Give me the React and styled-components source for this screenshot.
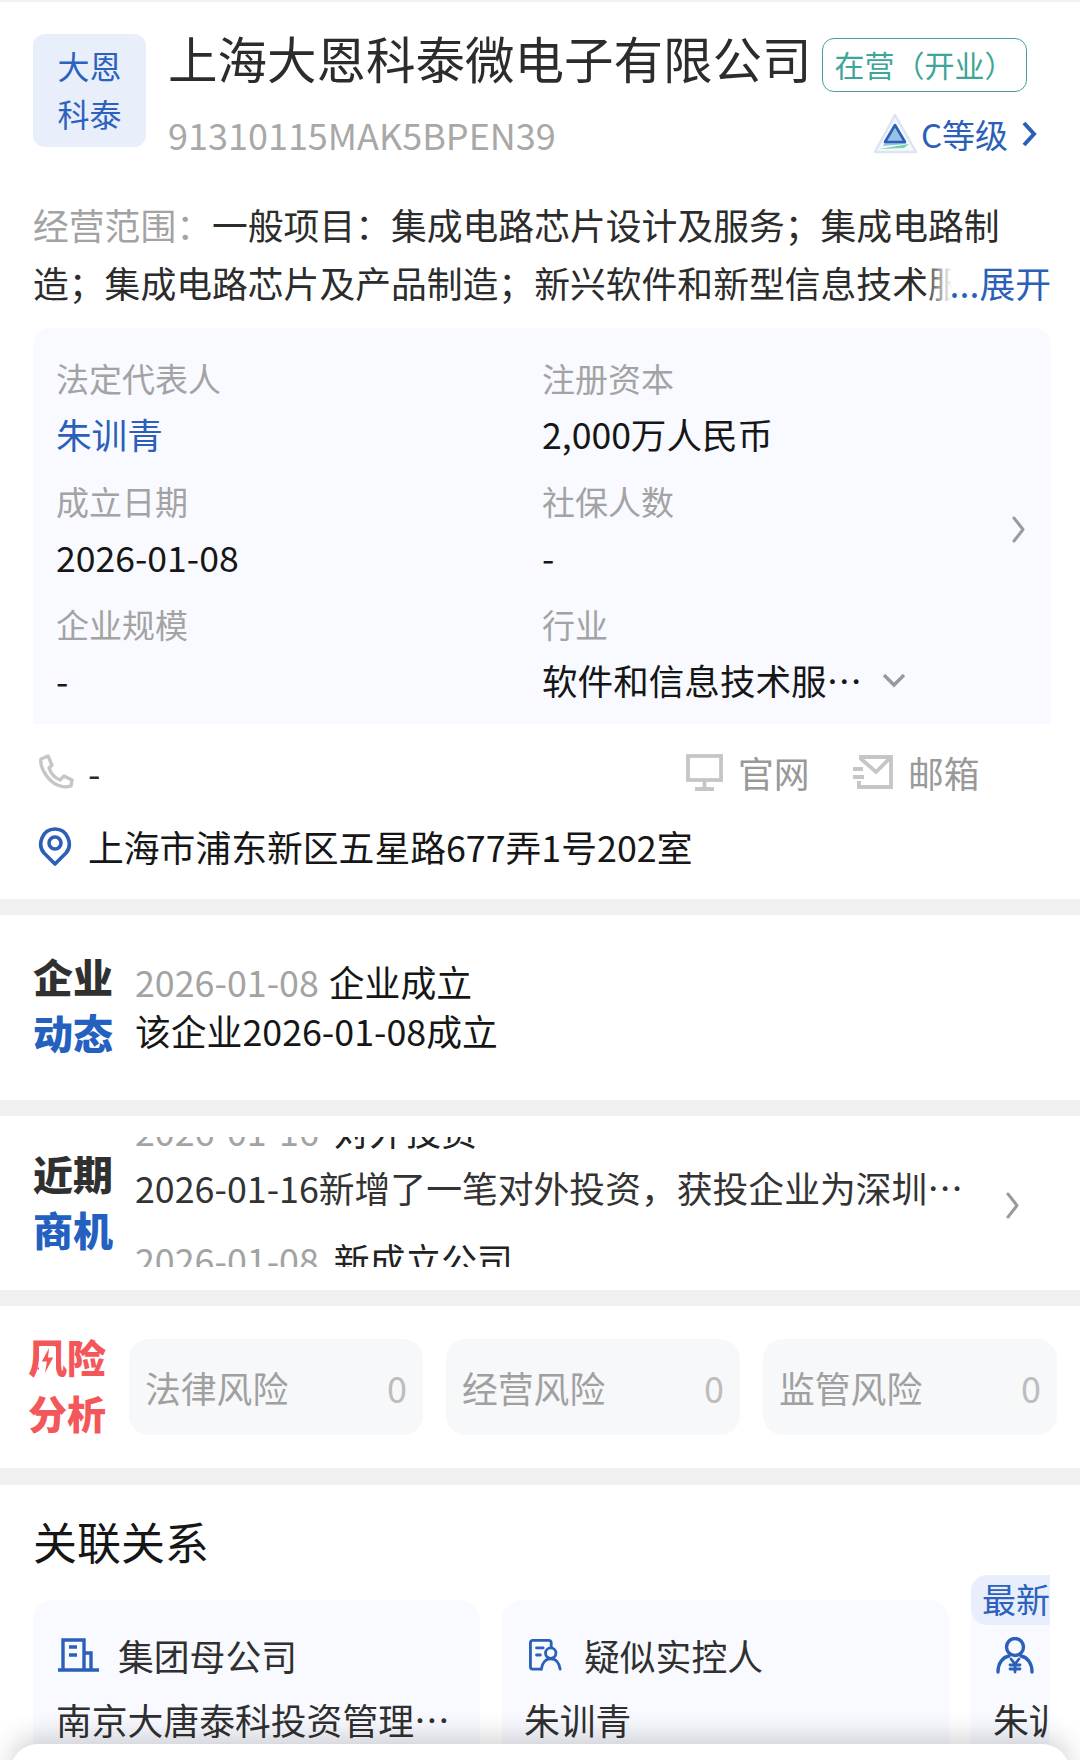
import React from "react";
import styled, { createGlobalStyle } from "styled-components";

const Global = createGlobalStyle`
  html, body { margin: 0; padding: 0; background: #fff; }
  * { box-sizing: border-box; }
  body { font-family: "Noto Sans CJK SC", "Noto Sans", sans-serif; color: #222; }
`;

const Page = styled.div`
  position: relative;
  width: 1080px;
  height: 1760px;
  overflow: hidden;
  background: #fff;
  border-top: 2px solid #f2f2f2;
`;

const Band = styled.div`
  height: ${(p) => p.$h || 16}px;
  background: #f0f0f0;
`;

const Overview = styled.section`
  padding: 32px 29px 23px 33px;
`;

const Header = styled.header`
  display: flex;
  gap: 22px;
`;

const Logo = styled.div`
  flex: none;
  width: 113px;
  height: 113px;
  border-radius: 12px;
  background: #e8eefa;
  color: #2c62bd;
  font-size: 32px;
  line-height: 48px;
  padding: 7px 0 0;
  text-align: center;
`;

const HeadCol = styled.div`
  flex: 1;
  min-width: 0;
`;

const TitleRow = styled.div`
  display: flex;
  align-items: flex-start;
  gap: 10px;
  height: 58px;
`;

const Title = styled.h1`
  margin: 0;
  flex: none;
  font-size: 49.5px;
  line-height: 48px;
  font-weight: 400;
  color: #2c2c2c;
  white-space: nowrap;
`;

const StatusTag = styled.span`
  flex: none;
  width: 205px;
  height: 54px;
  margin-top: 4px;
  border: 1.5px solid #4c9ba2;
  border-radius: 12px;
  color: #3fa597;
  font-size: 30px;
  line-height: 50px;
  padding-left: 12px;
  white-space: nowrap;
`;

const CodeRow = styled.div`
  display: flex;
  align-items: center;
  justify-content: space-between;
  height: 48px;
  margin-top: 18px;
`;

const Code = styled.span`
  font-size: 36px;
  line-height: 48px;
  color: #a8a8a8;
`;

const Level = styled.span`
  display: flex;
  align-items: center;
  color: #2b5fb8;
  font-size: 33px;
  line-height: 48px;
  margin-right: 14px;
`;

const LevelGap = styled.span`
  width: 14px;
`;

const Scope = styled.div`
  position: relative;
  width: 1018px;
  height: 116px;
  margin-top: 37px;
  overflow: hidden;
  font-size: 35.8px;
  line-height: 58px;
  color: #2c2c2c;
`;

const ScopeKey = styled.span`
  color: #a3a3a3;
`;

const Expand = styled.span`
  position: absolute;
  right: 0;
  bottom: 0;
  padding-left: 26px;
  height: 58px;
  color: #2b5fb8;
  background: linear-gradient(90deg, rgba(255, 255, 255, 0), #fff 28px);
`;

const Panel = styled.div`
  position: relative;
  margin-top: 17px;
  width: 1018px;
  height: 396px;
  padding: 22px 0 0 23px;
  border-radius: 16px 16px 0 0;
  background: #f8faff;
  display: grid;
  grid-template-columns: 486px 1fr;
  row-gap: 11px;
  align-content: start;
`;

const Cell = styled.div`
  min-width: 0;
`;

const CellLabel = styled.div`
  font-size: 33px;
  line-height: 56px;
  color: #a3a3a3;
`;

const CellValue = styled.div`
  display: flex;
  align-items: center;
  font-size: 35.6px;
  line-height: 56px;
  color: ${(p) => p.$color || "#161616"};
  white-space: nowrap;
`;

const DownIcon = styled.svg`
  margin-left: 20px;
`;

const PanelArrow = styled.span`
  position: absolute;
  right: 25px;
  top: 188px;
  display: flex;
`;

const ContactRow = styled.div`
  display: flex;
  align-items: center;
  height: 60px;
  margin-top: 18px;
  padding-right: 41px;
  font-size: 35.8px;
  color: #2c2c2c;
`;

const Phone = styled.span`
  display: flex;
  align-items: center;
  gap: 14px;
  flex: 1;
  padding-left: 5px;
`;

const Action = styled.span`
  display: flex;
  align-items: center;
  gap: 15px;
  width: ${(p) => p.$w}px;
  color: #999;
`;

const AddressRow = styled.div`
  display: flex;
  align-items: center;
  gap: 16px;
  height: 60px;
  margin-top: 14px;
  padding-left: 5px;
  font-size: 35.8px;
  color: #161616;
`;

const Module = styled.section`
  display: flex;
  height: ${(p) => p.$h}px;
  padding: ${(p) => p.$top}px 0 0 33px;
`;

const ModuleLabel = styled.div`
  flex: none;
  width: 80px;
  margin-top: ${(p) => p.$mt || 0}px;
  margin-right: 22px;
  font-size: 40px;
  line-height: 56px;
  font-weight: 900;
  color: #303030;
`;

const Accent = styled.div`
  color: #2460c0;
`;

const NewsCol = styled.div`
  margin-top: 9px;
  font-size: 35.8px;
  line-height: 49px;
  color: #161616;
`;

const Dim = styled.span`
  color: #a3a3a3;
  margin-right: ${(p) => p.$gap || 10}px;
`;

const Ticker = styled.div`
  flex: none;
  width: 825px;
  height: 130px;
  overflow: hidden;
`;

const TickerTrack = styled.div`
  margin-top: -35px;
`;

const TickerTitle = styled.div`
  font-size: 35.8px;
  line-height: 56px;
  white-space: nowrap;
  color: #222;
`;

const TickerDetail = styled.div`
  font-size: 35.8px;
  line-height: 58px;
  margin-bottom: 15px;
  color: #333;
  white-space: nowrap;
`;

const TickerArrow = styled.span`
  flex: none;
  margin: 55px 0 0 45px;
  display: flex;
`;

const RiskSection = styled.section`
  display: flex;
  height: 162px;
  padding: 22px 0 0 28px;
`;

const RiskLabel = styled.div`
  position: relative;
  flex: none;
  width: 78px;
  margin-right: 23px;
  font-size: 39px;
  line-height: 56px;
  font-weight: 900;
  color: #f4575a;
`;

const Bolt = styled.span`
  position: absolute;
  left: 11px;
  top: 19px;
  width: 17px;
  height: 26px;
  background: #fff;
  display: flex;
  align-items: center;
  justify-content: center;
`;

const RiskCards = styled.div`
  display: flex;
  gap: 23px;
  margin-top: 11px;
`;

const RiskCard = styled.div`
  display: flex;
  align-items: center;
  justify-content: space-between;
  width: 294px;
  height: 96px;
  padding: 0 16px 0 16px;
  border-radius: 20px;
  background: #f7f8fa;
  font-size: 35.8px;
  color: #a0a0a0;
`;

const RiskCount = styled.span`
  color: #bdbdbd;
  font-size: 36px;
`;

const Relation = styled.section`
  padding: 26px 30px 0 33px;
`;

const Heading = styled.h2`
  margin: 0;
  font-size: 44px;
  line-height: 60px;
  font-weight: 400;
  color: #161616;
`;

const Scroller = styled.div`
  display: flex;
  gap: 22px;
  width: 1017px;
  height: 200px;
  margin-top: 4px;
  padding-top: 25px;
  overflow: hidden;
`;

const RelCard = styled.div`
  position: relative;
  flex: none;
  width: 447px;
  height: 175px;
  padding: 31px 0 0 ${(p) => p.$pad || 23}px;
  border-radius: 20px 20px 0 0;
  background: #f8faff;
`;

const RelHead = styled.div`
  display: flex;
  align-items: center;
  gap: ${(p) => p.$gap || 18}px;
  height: 48px;
  font-size: 35.8px;
  color: #303030;
  white-space: nowrap;
`;

const RelIcon = styled.span`
  display: flex;
  margin-left: ${(p) => p.$ml || 0}px;
`;

const RelValue = styled.div`
  margin-top: 16px;
  font-size: 35.8px;
  line-height: 48px;
  color: #303030;
  white-space: nowrap;
`;

const NewTag = styled.span`
  position: absolute;
  left: 0;
  top: -25px;
  height: 50px;
  padding: 0 14px 0 11px;
  border-radius: 16px 0 0 16px;
  background: #e8eefb;
  color: #2c62bd;
  font-size: 34px;
  line-height: 48px;
  white-space: nowrap;
`;

const Sheet = styled.div`
  position: absolute;
  left: 10px;
  right: 10px;
  bottom: -30px;
  height: 46px;
  border-radius: 28px 28px 0 0;
  background: #fff;
  box-shadow: 0 -8px 26px rgba(0, 0, 0, 0.17);
`;

const Chevron = ({ color = "#9a9a9a", w = 15, h = 27, sw = 3 }) => (
  <svg width={w} height={h} viewBox="0 0 15 27" fill="none" stroke={color} strokeWidth={sw} strokeLinecap="round" strokeLinejoin="round">
    <path d="M3 2l9 11.500L3 25" />
  </svg>
);

const LevelChevron = () => (
  <svg width="15" height="26" viewBox="0 0 15 26" fill="none" stroke="#2b5fb8" strokeWidth="4" strokeLinejoin="miter">
    <path d="M2 2l10 11-10 11" />
  </svg>
);

const LevelSvg = styled.svg`
  margin-right: 2px;
`;

const LevelIcon = () => (
  <LevelSvg width="46" height="42" viewBox="0 0 46 42">
    <path d="M22 2 L43 39 L2 39 Z" fill="#f6f9fd" stroke="#dbe5f4" strokeWidth="2.500" strokeLinejoin="round" />
    <path d="M22 12 L33 31 L10 33 Z" fill="#9cc3e6" />
    <path d="M22 12 L32 29 L12 29 Z" fill="#99c1e6" stroke="#2b5fb8" strokeWidth="2.600" strokeLinejoin="round" />
    <path d="M6 36 L36 31 L31 35 Z" fill="#6fd6a6" />
  </LevelSvg>
);

const PhoneIcon = () => (
  <svg width="36" height="36" viewBox="0 0 36 36" fill="none" stroke="#c6c6c6" strokeWidth="3.400" strokeLinejoin="round">
    <path d="M3 5 L10 2 L14 11 L11 14 C13 20 17 24 22 26 L26 22 L34 26 L33 32 C24 35 14 30 8 21 C4 15 2 10 3 5 Z" />
  </svg>
);

const MonitorIcon = () => (
  <svg width="37" height="37" viewBox="0 0 37 37" fill="none" stroke="#c6c6c6" strokeWidth="3.800">
    <rect x="2" y="2" width="33" height="24" />
    <path d="M18.500 26v8M9 35h19" />
  </svg>
);

const MailIcon = () => (
  <svg width="40" height="34" viewBox="0 0 40 34" fill="none" stroke="#c6c6c6" strokeWidth="3.800">
    <path d="M6 2h32v30H6v-6M7 3l16 14L37 3" />
    <path d="M0 14h10M0 22h11" />
  </svg>
);

const PinIcon = () => (
  <svg width="34" height="39" viewBox="0 0 34 39" fill="none" stroke="#2b5fb8" strokeWidth="3.600">
    <path d="M17 37 L6 26 C-1 18 4 2 17 2 C30 2 35 18 28 26 Z" strokeLinejoin="round" />
    <circle cx="17" cy="16" r="6" />
  </svg>
);

const BoltIcon = () => (
  <svg width="15" height="25" viewBox="0 0 13 24" fill="#f4575a">
    <path d="M8 0 L1 13 L6 13 L4 24 L12 9 L7 9 Z" />
  </svg>
);

const BuildingIcon = () => (
  <svg width="42" height="34" viewBox="0 0 42 34" fill="none" stroke="#2b5fb8" strokeWidth="3.400">
    <path d="M5 32V2h21v30M26 15h7v17M0 32h41" />
    <path d="M11 9h8M11 17h8" strokeWidth="3.400" />
  </svg>
);

const DocPersonIcon = () => (
  <svg width="34" height="34" viewBox="0 0 36 34" fill="none" stroke="#2b5fb8" strokeWidth="3" strokeLinecap="round">
    <path d="M13 32H4a2.500 2.500 0 0 1-2.500-2.500V4A2.500 2.500 0 0 1 4 1.500h17a2.500 2.500 0 0 1 2.500 2.500v5" />
    <path d="M8 9.500h7M8 17h4" />
    <circle cx="23" cy="15" r="5.500" />
    <path d="M13 32c1-7 5-11 10-11s9 4 10 11" />
  </svg>
);

const ControlIcon = () => (
  <svg width="38" height="37" viewBox="0 0 38 37" fill="none" stroke="#2b5fb8" strokeWidth="3.400" strokeLinecap="round">
    <circle cx="19" cy="10" r="8.500" />
    <path d="M2 35c0-9 5-15 11-16M36 35c0-9-5-15-11-16" />
    <path d="M15 22l4 5 4-5M14 28h10M14 32h10M19 27v8" strokeWidth="2.800" />
  </svg>
);

export default function App() {
  return (
    <Page>
      <Global />
      <Overview>
        <Header>
          <Logo>大恩<br />科泰</Logo>
          <HeadCol>
            <TitleRow>
              <Title>上海大恩科泰微电子有限公司</Title>
              <StatusTag>在营（开业）</StatusTag>
            </TitleRow>
            <CodeRow>
              <Code>91310115MAK5BPEN39</Code>
              <Level>
                <LevelIcon />
                C等级
                <LevelGap />
                <LevelChevron />
              </Level>
            </CodeRow>
          </HeadCol>
        </Header>
        <Scope>
          <ScopeKey>经营范围：</ScopeKey>一般项目：集成电路芯片设计及服务；集成电路制造；集成电路芯片及产品制造；新兴软件和新型信息技术服务
          <Expand>...展开</Expand>
        </Scope>
        <Panel>
          <Cell><CellLabel>法定代表人</CellLabel><CellValue $color="#2b5fb8">朱训青</CellValue></Cell>
          <Cell><CellLabel>注册资本</CellLabel><CellValue>2,000万人民币</CellValue></Cell>
          <Cell><CellLabel>成立日期</CellLabel><CellValue>2026-01-08</CellValue></Cell>
          <Cell><CellLabel>社保人数</CellLabel><CellValue>-</CellValue></Cell>
          <Cell><CellLabel>企业规模</CellLabel><CellValue>-</CellValue></Cell>
          <Cell>
            <CellLabel>行业</CellLabel>
            <CellValue>
              软件和信息技术服…
              <DownIcon width="24" height="15" viewBox="0 0 24 15" fill="none" stroke="#999" strokeWidth="3.400">
                <path d="M2 2l10 10 10-10" />
              </DownIcon>
            </CellValue>
          </Cell>
          <PanelArrow><Chevron /></PanelArrow>
        </Panel>
        <ContactRow>
          <Phone><PhoneIcon />-</Phone>
          <Action $w={167}><MonitorIcon />官网</Action>
          <Action $w={157}><MailIcon />邮箱</Action>
        </ContactRow>
        <AddressRow><PinIcon />上海市浦东新区五星路677弄1号202室</AddressRow>
      </Overview>
      <Band />
      <Module $h={185} $top={33}>
        <ModuleLabel>企业<Accent>动态</Accent></ModuleLabel>
        <NewsCol>
          <div><Dim>2026-01-08</Dim>企业成立</div>
          <div>该企业2026-01-08成立</div>
        </NewsCol>
      </Module>
      <Band />
      <Module $h={174} $top={21}>
        <ModuleLabel $mt={8}>近期<Accent>商机</Accent></ModuleLabel>
        <Ticker>
          <TickerTrack>
            <TickerTitle><Dim $gap={15}>2026-01-16</Dim>对外投资</TickerTitle>
            <TickerDetail>2026-01-16新增了一笔对外投资，获投企业为深圳…</TickerDetail>
            <TickerTitle><Dim $gap={15}>2026-01-08</Dim>新成立公司</TickerTitle>
          </TickerTrack>
        </Ticker>
        <TickerArrow><Chevron /></TickerArrow>
      </Module>
      <Band />
      <RiskSection>
        <RiskLabel>
          风险<br />分析
          <Bolt><BoltIcon /></Bolt>
        </RiskLabel>
        <RiskCards>
          <RiskCard>法律风险<RiskCount>0</RiskCount></RiskCard>
          <RiskCard>经营风险<RiskCount>0</RiskCount></RiskCard>
          <RiskCard>监管风险<RiskCount>0</RiskCount></RiskCard>
        </RiskCards>
      </RiskSection>
      <Band $h={17} />
      <Relation>
        <Heading>关联关系</Heading>
        <Scroller>
          <RelCard>
            <RelHead><RelIcon $ml={2}><BuildingIcon /></RelIcon>集团母公司</RelHead>
            <RelValue>南京大唐泰科投资管理…</RelValue>
          </RelCard>
          <RelCard $pad={22}>
            <RelHead $gap={21}><RelIcon $ml={5}><DocPersonIcon /></RelIcon>疑似实控人</RelHead>
            <RelValue>朱训青</RelValue>
          </RelCard>
          <RelCard $pad={22}>
            <NewTag>最新法人</NewTag>
            <RelHead><RelIcon $ml={3}><ControlIcon /></RelIcon>实际控制人</RelHead>
            <RelValue>朱训青</RelValue>
          </RelCard>
        </Scroller>
      </Relation>
      <Sheet />
    </Page>
  );
}
